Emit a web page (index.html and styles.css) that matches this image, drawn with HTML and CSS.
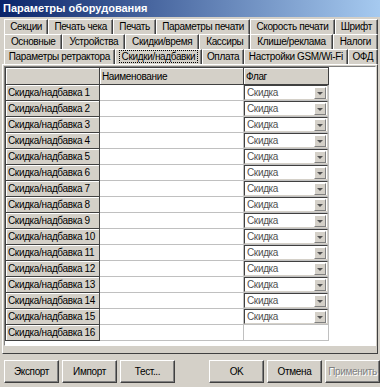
FILE: index.html
```html
<!DOCTYPE html>
<html lang="ru">
<head>
    <meta charset="UTF-8">
    <title>Параметры оборудования</title>
    <link rel="stylesheet" href="styles.css">
</head>
<body>
<div class="window">
    <div class="titlebar">Параметры оборудования</div>

    <div class="tabs">
        <div class="tab-row">
            <div class="tab">Секции</div>
            <div class="tab">Печать чека</div>
            <div class="tab">Печать</div>
            <div class="tab">Параметры печати</div>
            <div class="tab">Скорость печати</div>
            <div class="tab">Шрифт</div>
        </div>
        <div class="tab-row">
            <div class="tab">Основные</div>
            <div class="tab">Устройства</div>
            <div class="tab">Скидки/время</div>
            <div class="tab">Кассиры</div>
            <div class="tab">Клише/реклама</div>
            <div class="tab">Налоги</div>
        </div>
        <div class="tab-row">
            <div class="tab">Параметры ретрактора</div>
            <div class="tab active"><span class="focus">Скидки/надбавки</span></div>
            <div class="tab">Оплата</div>
            <div class="tab">Настройки GSM/Wi-Fi</div>
            <div class="tab">ОФД</div>
        </div>
    </div>

    <div class="page">
        <div class="grid-box">
            <table class="grid">
                <thead>
                    <tr>
                        <th class="fixed"></th>
                        <th class="fixed head">Наименование</th>
                        <th class="fixed head">Флаг</th>
                    </tr>
                </thead>
                <tbody id="rows"></tbody>
            </table>
        </div>
    </div>

    <div class="buttons">
        <div class="btn-group">
            <button class="btn">Экспорт</button>
            <button class="btn">Импорт</button>
            <button class="btn">Тест...</button>
        </div>
        <div class="btn-group">
            <button class="btn">OK</button>
            <button class="btn">Отмена</button>
            <button class="btn disabled">Применить</button>
        </div>
    </div>
</div>

<script>
    // строки таблицы скидок
    const rows = document.getElementById('rows');
    for (let i = 1; i <= 16; i++) {
        const tr = document.createElement('tr');
        const flag = i < 16
            ? '<div class="combo"><span>Скидка</span><span class="drop"></span></div>'
            : '';
        tr.innerHTML = `<td class="fixed">Скидка/надбавка ${i}</td><td class="cell"></td><td class="cell flag">${flag}</td>`;
        rows.appendChild(tr);
    }
</script>
</body>
</html>
```

FILE: styles.css
```css
body {
    margin: 0;
    font-family: "Liberation Sans", Arial, sans-serif;
    font-size: 10px;
    letter-spacing: -0.35px;
    color: #000;
}
.window {
    width: 380px;
    height: 387px;
    background: #d4d0c8;
    overflow: hidden;
}
.titlebar {
    height: 17px;
    line-height: 17px;
    padding-left: 3px;
    background: linear-gradient(to right, #0a246a, #a6caf0);
    color: #fff;
    font-size: 11px;
    font-weight: bold;
    letter-spacing: 0;
}
.tabs {
    padding: 2px 2px 0 4px;
}
.tab-row {
    display: flex;
    height: 15px;
}
.tab {
    flex: 1 1 auto;
    text-align: center;
    line-height: 14px;
    border-top: 1px solid #fff;
    border-left: 1px solid #fff;
    border-right: 1px solid #404040;
    box-shadow: inset -1px 0 #808080;
    white-space: nowrap;
}
.tab.active .focus {
    outline: 1px dotted #000;
    padding: 0 2px;
}
.page {
    margin: 0 2px;
    height: 286px;
    border: 1px solid;
    border-color: #fff #404040 #404040 #fff;
    padding: 1px;
}
.grid-box {
    height: 278px;
    border: 1px solid;
    border-color: #808080 #fff #fff #808080;
    background: #fff;
}
.grid {
    border-collapse: collapse;
    table-layout: fixed;
    width: 318px;
}
.grid th,
.grid td {
    height: 15px;
    padding: 0;
    white-space: nowrap;
    overflow: hidden;
}
.grid th {
    height: 16px;
}
.fixed {
    background: #d4d0c8;
    border: 1px solid #404040;
    box-shadow: inset 1px 1px #fff;
    font-weight: normal;
    text-align: left;
    padding-left: 2px !important;
}
.grid th:nth-child(1) { width: 91px; }
.grid th:nth-child(2) { width: 141px; }
.grid th:nth-child(3) { width: 82px; }
.cell {
    border: 1px solid #c0c0c0;
}
.flag {
    padding: 0 !important;
}
.combo {
    display: flex;
    align-items: center;
    height: 13px;
    border: 1px solid;
    border-color: #404040 #d4d0c8 #d4d0c8 #404040;
    color: #505050;
    padding-left: 2px;
}
.combo span:first-child {
    flex: 1;
}
.drop {
    width: 12px;
    height: 12px;
    background: #d4d0c8;
    border: 1px solid;
    border-color: #fff #808080 #808080 #fff;
    position: relative;
    box-sizing: border-box;
    margin-right: 1px;
}
.drop::after {
    content: "";
    position: absolute;
    left: 2px;
    top: 4px;
    border: 3px solid transparent;
    border-top: 3px solid #505050;
    border-bottom: none;
}
.buttons {
    display: flex;
    justify-content: space-between;
    padding: 6px 0 0 4px;
}
.btn-group {
    display: flex;
    gap: 3px;
}
.btn {
    width: 55px;
    height: 23px;
    padding: 0;
    font-family: "Liberation Sans", Arial, sans-serif;
    font-size: 10px;
    letter-spacing: -0.35px;
    background: #d4d0c8;
    border: 1px solid;
    border-color: #fff #404040 #404040 #fff;
    box-shadow: inset -1px -1px #808080;
    color: #000;
}
.btn.disabled {
    color: #808080;
    text-shadow: 1px 1px #fff;
}
```
